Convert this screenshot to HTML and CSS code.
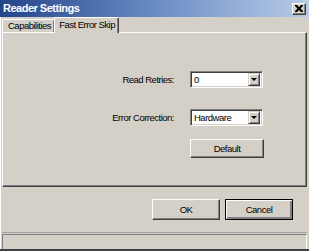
FILE: index.html
```html
<!DOCTYPE html>
<html lang="en">
<head>
  <meta charset="UTF-8">
  <title>Reader Settings</title>
  <link rel="stylesheet" href="styles.css">
</head>
<body>
  <div class="window">
    <!-- Title bar -->
    <div class="titlebar">
      <span class="title">Reader Settings</span>
      <span class="close">
        <svg width="8" height="7" viewBox="0 0 8 7">
          <path d="M0 0h2l2 2 2-2h2v1l-2.5 2.5L8 6v1H6L4 5 2 7H0V6l2.5-2.5L0 1z" fill="#000"/>
        </svg>
      </span>
    </div>

    <div class="body">
      <!-- Tabs -->
      <div class="tabs">
        <div class="tab">Capabilities</div>
        <div class="tab active">Fast Error Skip</div>
      </div>

      <!-- Tab panel -->
      <div class="panel">
        <div class="form">
          <label class="label">Read Retries:</label>
          <div class="select"><span class="value">0</span><span class="arrow"></span></div>

          <label class="label">Error Correction:</label>
          <div class="select"><span class="value">Hardware</span><span class="arrow"></span></div>

          <span></span>
          <button class="btn btn-default-size">Default</button>
        </div>
      </div>

      <!-- Dialog buttons -->
      <div class="actions">
        <button class="btn">OK</button>
        <button class="btn primary">Cancel</button>
      </div>

      <!-- Status bar -->
      <div class="status"><div class="status-box"></div></div>
    </div>
  </div>
</body>
</html>
```

FILE: styles.css
```css
body {
  margin: 0;
  font-family: "Liberation Sans", Arial, sans-serif;
  font-size: 9.5px;
  letter-spacing: -0.5px;
  background: #d4d0c8;
}

.window {
  width: 309px;
  height: 251px;
  background: #d4d0c8;
  border-bottom: 2px solid #404040;
  box-sizing: border-box;
  display: flex;
  flex-direction: column;
  overflow: hidden;
}

.titlebar {
  height: 17px;
  flex: none;
  background: linear-gradient(to right, #24448a, #6a8cc4 50%, #b8cce8);
  display: flex;
  align-items: center;
  justify-content: space-between;
  padding: 0 3px 1px 3px;
  box-sizing: border-box;
}

.title {
  color: #fff;
  font-size: 11px;
  font-weight: bold;
  letter-spacing: -0.5px;
}

.close {
  width: 14px;
  height: 12px;
  box-sizing: border-box;
  background: #d4d0c8;
  border: 1px solid;
  border-color: #fff #404040 #404040 #fff;
  box-shadow: inset -1px -1px #808080;
  display: flex;
  align-items: center;
  justify-content: center;
  margin-top: 1px;
}

.body {
  flex: 1;
  display: flex;
  flex-direction: column;
  border-left: 1px solid #fff;
  padding: 0 2px 0 1px;
}

.tabs {
  display: flex;
  height: 15px;
  align-items: flex-end;
  position: relative;
  z-index: 1;
}

.tab {
  height: 13px;
  padding: 0 3px 0 5px;
  box-sizing: border-box;
  border: 1px solid;
  border-color: #fff #404040 transparent #fff;
  border-bottom: none;
  box-shadow: inset -1px 0 #808080;
  border-radius: 2px 2px 0 0;
  line-height: 12px;
}

.tab.active {
  height: 16px;
  margin-bottom: -1px;
  background: #d4d0c8;
  padding: 0 3px 0 4px;
  line-height: 14px;
  border-left: 1px solid #fff;
  margin-left: -1px;
}

.panel {
  height: 155px;
  box-sizing: border-box;
  border: 1px solid;
  border-color: #fff #404040 #404040 #fff;
  box-shadow: inset -1px -1px #808080;
}

.form {
  display: grid;
  grid-template-columns: 171px 73px;
  column-gap: 16px;
  row-gap: 0;
  grid-template-rows: 17px 21px 17px 13px 19px;
  padding-top: 38px;
}

.form > :nth-child(3),
.form > :nth-child(4) {
  grid-row: 3;
}

.form > :nth-child(5),
.form > :nth-child(6) {
  grid-row: 5;
}

.label {
  text-align: right;
  align-self: center;
}

.select {
  height: 17px;
  box-sizing: border-box;
  background: #fff;
  border: 1px solid;
  border-color: #808080 #fff #fff #808080;
  box-shadow: inset 1px 1px #404040, inset -1px -1px #d4d0c8;
  display: flex;
  align-items: center;
  padding: 2px 2px 2px 3px;
}

.value {
  flex: 1;
  line-height: 13px;
}

.arrow {
  width: 12px;
  height: 13px;
  box-sizing: border-box;
  background: #d4d0c8;
  border: 1px solid;
  border-color: #d4d0c8 #404040 #404040 #d4d0c8;
  box-shadow: inset 1px 1px #fff, inset -1px -1px #808080;
  position: relative;
}

.arrow::after {
  content: "";
  position: absolute;
  left: 2px;
  top: 4px;
  border-left: 3px solid transparent;
  border-right: 3px solid transparent;
  border-top: 3px solid #000;
}

.btn {
  font: inherit;
  letter-spacing: inherit;
  color: #000;
  background: #d4d0c8;
  width: 68px;
  height: 21px;
  padding: 0;
  border: 1px solid;
  border-color: #fff #404040 #404040 #fff;
  box-shadow: inset -1px -1px #808080;
}

.btn-default-size {
  width: 74px;
  height: 19px;
}

.btn.primary {
  border: 1px solid #000;
  box-shadow: inset 1px 1px #fff, inset -2px -2px #808080, inset -1px -1px #404040;
}

.actions {
  display: flex;
  justify-content: flex-end;
  gap: 5px;
  padding: 12px 14px 0 0;
  height: 45px;
  box-sizing: border-box;
}

.status {
  border-top: 1px solid #a0a0a0;
  padding: 1px 0 0 0;
}

.status-box {
  height: 15px;
  border: 1px solid;
  border-color: #808080 #fff #fff #808080;
}
```
